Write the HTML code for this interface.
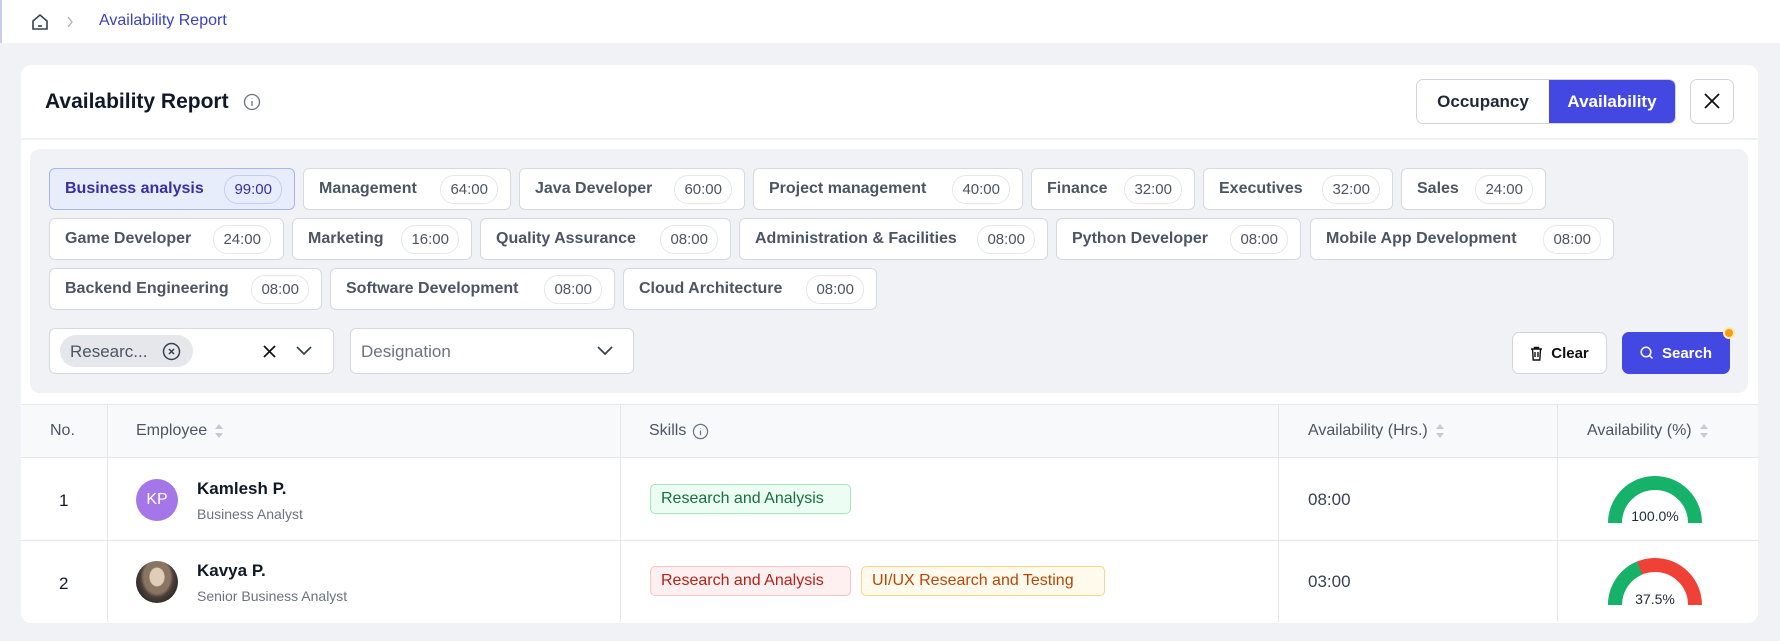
<!DOCTYPE html>
<html><head><meta charset="utf-8"><style>
*{box-sizing:border-box;margin:0;padding:0}
body{width:1780px;height:641px;background:#f1f2f6;font-family:"Liberation Sans",sans-serif;position:relative;overflow:hidden;color:#111827}
.abs{position:absolute}
.top{left:0;top:0;width:1780px;height:43px;background:#fff;border-left:2px solid #c9cbea}
.card{left:21px;top:65px;width:1737px;height:558px;background:#fff;border-radius:10px}
.filt{left:30px;top:149px;width:1718px;height:244px;background:#f1f2f6;border-radius:10px}
.chip{position:absolute;height:42px;background:#fff;border:1px solid #d6d9e0;border-radius:6px;display:flex;align-items:center;justify-content:space-between;padding:0 12px 0 15px;font-size:16px;color:#4b5563;font-weight:600;white-space:nowrap}
.chip b{font-weight:400;font-size:15px;border:1px solid #e5e7eb;border-radius:14px;padding:5px 9px;color:#4b5563}
.chip.sel{background:#e8edfc;border-color:#a8b6f0;color:#3730a3}
.chip.sel b{border-color:#c3cdf5;color:#3730a3}
.th{position:absolute;top:404px;height:54px;display:flex;align-items:center;font-size:16px;color:#4b5563}
.sort{display:inline-block;margin-left:8px;width:8px;height:14px;position:relative}
.sort:before,.sort:after{content:"";position:absolute;left:0;border-left:4px solid transparent;border-right:4px solid transparent}
.sort:before{top:0;border-bottom:5px solid #c5c9d2}
.sort:after{bottom:0;border-top:5px solid #c5c9d2}
.tag{position:absolute;height:30px;border-radius:5px;font-size:16px;display:flex;align-items:center;padding:0 10px}
</style></head><body>
<div class="abs top"></div>
<svg class="abs" style="left:30px;top:12px" width="20" height="20" viewBox="0 0 20 20" fill="none" stroke="#374151" stroke-width="1.6"><path d="M3 9 L10 3 L17 9 V17 H3 Z"/><path d="M8 14 H12"/></svg>
<svg class="abs" style="left:66px;top:16px" width="8" height="12" viewBox="0 0 8 12" fill="none" stroke="#b0b4bd" stroke-width="1.4"><path d="M2 1l4 5-4 5"/></svg>
<div class="abs" style="left:99px;top:12px;color:#3b3fc4;font-size:16px">Availability Report</div>

<div class="abs card"></div>
<div class="abs" style="left:45px;top:90px;font-size:21px;font-weight:600;color:#111827">Availability Report</div>
<svg class="abs" style="left:243px;top:93px" width="18" height="18" viewBox="0 0 18 18" fill="none" stroke="#6b7280" stroke-width="1.3"><circle cx="9" cy="9" r="7.5"/><path d="M9 8v5M9 5.3v.5"/></svg>
<div class="abs" style="left:21px;top:138px;width:1737px;height:2px;background:#eef0f3"></div>
<div class="abs" style="left:1416px;top:79px;width:260px;height:45px;border:1px solid #d1d5db;border-radius:7px;overflow:hidden;display:flex;font-size:17px;font-weight:600">
<div style="width:132px;display:flex;align-items:center;justify-content:center;color:#1f2937">Occupancy</div>
<div style="flex:1;background:#4348e2;color:#fff;display:flex;align-items:center;justify-content:center">Availability</div></div>
<div class="abs" style="left:1690px;top:79px;width:44px;height:45px;border:1px solid #d1d5db;border-radius:7px"></div>
<svg class="abs" style="left:1703px;top:92px" width="18" height="18" viewBox="0 0 18 18" stroke="#111" stroke-width="1.8"><path d="M2 2L16 16M16 2L2 16"/></svg>

<div class="abs filt"></div>
<div class="chip sel" style="left:49px;top:168px;width:246px">Business analysis<b>99:00</b></div>
<div class="chip" style="left:303px;top:168px;width:208px">Management<b>64:00</b></div>
<div class="chip" style="left:519px;top:168px;width:226px">Java Developer<b>60:00</b></div>
<div class="chip" style="left:753px;top:168px;width:270px">Project management<b>40:00</b></div>
<div class="chip" style="left:1031px;top:168px;width:164px">Finance<b>32:00</b></div>
<div class="chip" style="left:1203px;top:168px;width:190px">Executives<b>32:00</b></div>
<div class="chip" style="left:1401px;top:168px;width:145px">Sales<b>24:00</b></div>
<div class="chip" style="left:49px;top:218px;width:235px">Game Developer<b>24:00</b></div>
<div class="chip" style="left:292px;top:218px;width:180px">Marketing<b>16:00</b></div>
<div class="chip" style="left:480px;top:218px;width:251px">Quality Assurance<b>08:00</b></div>
<div class="chip" style="left:739px;top:218px;width:309px">Administration &amp; Facilities<b>08:00</b></div>
<div class="chip" style="left:1056px;top:218px;width:245px">Python Developer<b>08:00</b></div>
<div class="chip" style="left:1310px;top:218px;width:304px">Mobile App Development<b>08:00</b></div>
<div class="chip" style="left:49px;top:268px;width:273px">Backend Engineering<b>08:00</b></div>
<div class="chip" style="left:330px;top:268px;width:285px">Software Development<b>08:00</b></div>
<div class="chip" style="left:623px;top:268px;width:254px">Cloud Architecture<b>08:00</b></div>

<div class="abs" style="left:49px;top:328px;width:285px;height:46px;background:#fff;border:1px solid #d6d9e0;border-radius:6px"></div>
<div class="abs" style="left:60px;top:335px;width:133px;height:32px;background:#e5e7eb;border-radius:16px;font-size:17px;color:#4b5563;padding:7px 0 0 10px">Researc...</div>
<svg class="abs" style="left:162px;top:342px" width="19" height="19" viewBox="0 0 19 19" fill="none" stroke="#374151" stroke-width="1.5"><circle cx="9.5" cy="9.5" r="8"/><path d="M7 7l5 5M12 7l-5 5"/></svg>
<svg class="abs" style="left:263px;top:345px" width="13" height="13" viewBox="0 0 13 13" stroke="#111" stroke-width="1.7"><path d="M1 1l11 11M12 1L1 12"/></svg>
<svg class="abs" style="left:296px;top:346px" width="16" height="10" viewBox="0 0 16 10" fill="none" stroke="#374151" stroke-width="1.7"><path d="M1 1l7 7 7-7"/></svg>
<div class="abs" style="left:350px;top:328px;width:284px;height:46px;background:#fff;border:1px solid #d6d9e0;border-radius:6px;font-size:17px;color:#6b7280;padding:13px 0 0 10px">Designation</div>
<svg class="abs" style="left:597px;top:346px" width="16" height="10" viewBox="0 0 16 10" fill="none" stroke="#374151" stroke-width="1.7"><path d="M1 1l7 7 7-7"/></svg>

<div class="abs" style="left:1512px;top:332px;width:95px;height:42px;background:#fff;border:1px solid #d1d5db;border-radius:7px;display:flex;align-items:center;justify-content:center;font-size:15px;font-weight:600;color:#111">
<svg width="13" height="15" viewBox="0 0 13 15" fill="none" stroke="#111" stroke-width="1.4" style="margin-right:8px"><path d="M1 3h11M4.5 3V1.5h4V3M2.5 3l.7 11h6.6l.7-11M5 6v5M8 6v5"/></svg>Clear</div>
<div class="abs" style="left:1622px;top:332px;width:108px;height:42px;background:#4348e2;border-radius:7px;display:flex;align-items:center;justify-content:center;font-size:15px;font-weight:600;color:#fff">
<svg width="14" height="14" viewBox="0 0 14 14" fill="none" stroke="#fff" stroke-width="1.5" style="margin-right:8px"><circle cx="6" cy="6" r="4.8"/><path d="M9.5 9.5l3 3"/></svg>Search</div>
<div class="abs" style="left:1723px;top:327px;width:12px;height:12px;border-radius:50%;background:#f59e0b;border:2px solid #fde7b8"></div>

<div class="abs" style="left:21px;top:404px;width:1737px;height:54px;background:#f8f9fb;border-top:1px solid #e5e7eb;border-bottom:1px solid #e5e7eb"></div>
<div class="abs" style="left:21px;top:540px;width:1737px;height:1px;background:#e5e7eb"></div>
<div class="abs" style="left:107px;top:404px;width:1px;height:218px;background:#e5e7eb"></div>
<div class="abs" style="left:620px;top:404px;width:1px;height:218px;background:#e5e7eb"></div>
<div class="abs" style="left:1278px;top:404px;width:1px;height:218px;background:#e5e7eb"></div>
<div class="abs" style="left:1557px;top:404px;width:1px;height:218px;background:#e5e7eb"></div>
<div class="th" style="left:50px">No.</div>
<div class="th" style="left:136px">Employee<span class="sort"></span></div>
<div class="th" style="left:649px">Skills<svg width="17" height="17" viewBox="0 0 18 18" fill="none" stroke="#6b7280" stroke-width="1.3" style="margin-left:6px"><circle cx="9" cy="9" r="7.5"/><path d="M9 8v5M9 5.3v.5"/></svg></div>
<div class="th" style="left:1308px">Availability (Hrs.)<span class="sort"></span></div>
<div class="th" style="left:1587px">Availability (%)<span class="sort"></span></div>

<div class="abs" style="left:59px;top:491px;font-size:17px">1</div>
<div class="abs" style="left:59px;top:574px;font-size:17px">2</div>
<div class="abs" style="left:136px;top:479px;width:42px;height:42px;border-radius:50%;background:#a476e8;color:#fff;font-size:16px;display:flex;align-items:center;justify-content:center">KP</div>
<div class="abs" style="left:136px;top:561px;width:42px;height:42px;border-radius:50%;background:radial-gradient(ellipse at 50% 38%,#e0cdb8 0 24%,#8a7462 27% 45%,#4a403a 55%,#2e2a27 75%)"></div>
<div class="abs" style="left:197px;top:479px;font-size:17px;font-weight:600">Kamlesh P.</div>
<div class="abs" style="left:197px;top:506px;font-size:14px;color:#6b7280">Business Analyst</div>
<div class="abs" style="left:197px;top:561px;font-size:17px;font-weight:600">Kavya P.</div>
<div class="abs" style="left:197px;top:588px;font-size:14px;color:#6b7280">Senior Business Analyst</div>
<div class="tag" style="left:650px;top:484px;width:201px;background:#ecfdf3;border:1px solid #a7e5c0;color:#15703e">Research and Analysis</div>
<div class="tag" style="left:650px;top:566px;width:201px;background:#fef0f0;border:1px solid #f8c4c4;color:#b42318">Research and Analysis</div>
<div class="tag" style="left:861px;top:566px;width:244px;background:#fffaeb;border:1px solid #f6d58a;color:#b54708">UI/UX Research and Testing</div>
<div class="abs" style="left:1308px;top:490px;font-size:17px;color:#374151">08:00</div>
<div class="abs" style="left:1308px;top:572px;font-size:17px;color:#374151">03:00</div>
<svg class="abs" style="left:1600px;top:470px" width="110" height="60" viewBox="0 0 110 60"><path d="M15 53 A40 40 0 0 1 95 53" fill="none" stroke="#17b26a" stroke-width="14"/></svg>
<div class="abs" style="left:1655px;top:508px;transform:translateX(-50%);font-size:14px;color:#1f2937">100.0%</div>
<svg class="abs" style="left:1600px;top:552px" width="110" height="60" viewBox="0 0 110 60"><path d="M15 53 A40 40 0 0 1 95 53" fill="none" stroke="#ef4136" stroke-width="14"/><path d="M15 53 A40 40 0 0 1 39.7 16" fill="none" stroke="#17b26a" stroke-width="14"/></svg>
<div class="abs" style="left:1655px;top:591px;transform:translateX(-50%);font-size:14px;color:#1f2937">37.5%</div>
</body></html>
